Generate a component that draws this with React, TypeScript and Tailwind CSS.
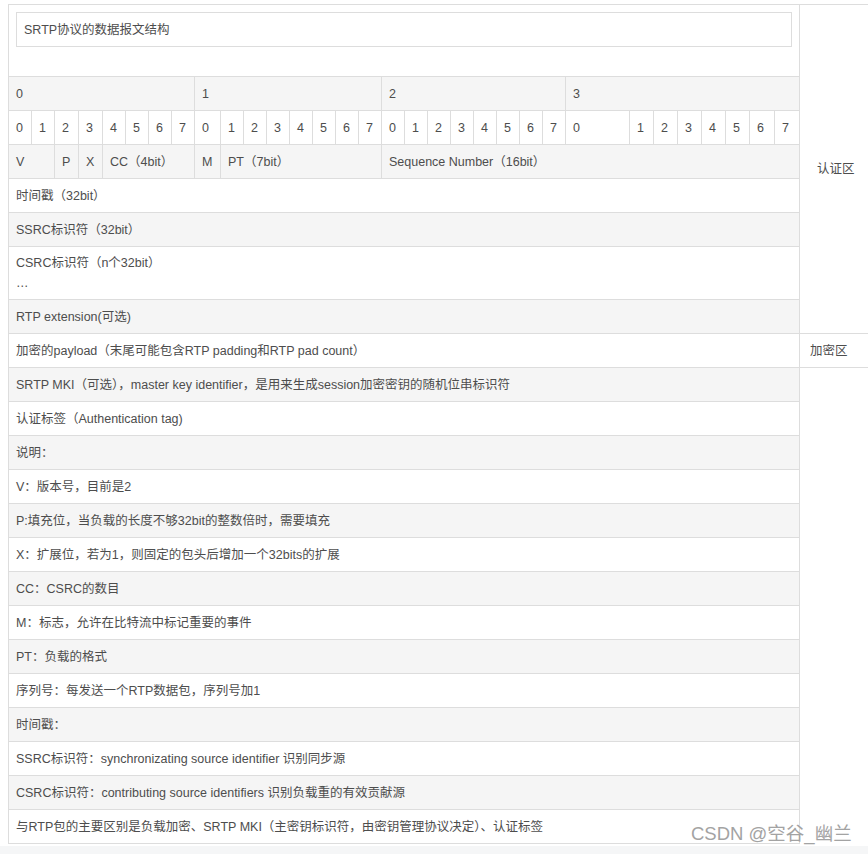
import React from "react";

// Bit layout header of the SRTP packet table
const GROUPS = ["0", "1", "2", "3"];
const BITS = ["0", "1", "2", "3", "4", "5", "6", "7"];

const FIELDS: { label: string; span: string }[] = [
    { label: "V", span: "col-span-2" },
    { label: "P", span: "col-span-1" },
    { label: "X", span: "col-span-1" },
    { label: "CC（4bit）", span: "col-span-4" },
    { label: "M", span: "col-span-1" },
    { label: "PT（7bit）", span: "col-span-7" },
    { label: "Sequence Number（16bit）", span: "col-span-16" },
];

// Full-width rows after the field row, index 4 onwards
const AUTH_ROWS = ["时间戳（32bit）", "SSRC标识符（32bit）", "CSRC", "RTP extension(可选)"];

const NOTE_ROWS = [
    "SRTP MKI（可选），master key identifier，是用来生成session加密密钥的随机位串标识符",
    "认证标签（Authentication tag)",
    "说明：",
    "V：版本号，目前是2",
    "P:填充位，当负载的长度不够32bit的整数倍时，需要填充",
    "X：扩展位，若为1，则固定的包头后增加一个32bits的扩展",
    "CC：CSRC的数目",
    "M：标志，允许在比特流中标记重要的事件",
    "PT：负载的格式",
    "序列号：每发送一个RTP数据包，序列号加1",
    "时间戳：",
    "SSRC标识符：synchronizating source identifier 识别同步源",
    "CSRC标识符：contributing source identifiers 识别负载重的有效贡献源",
    "与RTP包的主要区别是负载加密、SRTP MKI（主密钥标识符，由密钥管理协议决定）、认证标签",
];

const cell = "flex items-center border-b border-r border-[#dddddd] px-[7px]";

function rowBg(index: number): string {
    return index % 2 === 1 ? "bg-[#f5f5f5]" : "bg-white";
}

export default function App() {
    return (
        <div className="relative flex min-h-[854px] flex-col overflow-hidden bg-white font-['Liberation_Sans','Noto_Sans_CJK_SC',sans-serif] text-[12.5px] leading-[20px] text-[#4d4d4d]">
            <div className="ml-[8px] mt-[4px] grid w-fit grid-cols-[23px_23px_repeat(2,24px)_repeat(4,23px)_26px_repeat(15,23px)_64px_repeat(5,24px)_25px_25px_68px] grid-rows-[72px_repeat(5,34px)_53px_repeat(16,34px)] border-l border-t border-[#dddddd]">
                {/* title row */}
                <div className="col-span-32 flex flex-col border-b border-r border-[#dddddd] bg-white px-[7px] pt-[7px]">
                    <div className="flex h-[35px] items-center border border-[#dddddd] px-[7px]">
                        SRTP协议的数据报文结构
                    </div>
                </div>
                <div className="row-span-8 flex items-center border-b border-[#dddddd] bg-white pl-[17px]">
                    认证区
                </div>

                {/* byte numbers */}
                {GROUPS.map((g) => (
                    <div key={g} className={`${cell} col-span-8 bg-[#f5f5f5]`}>
                        {g}
                    </div>
                ))}

                {/* bit numbers */}
                {GROUPS.map((g) =>
                    BITS.map((b) => (
                        <div key={g + b} className={`${cell} bg-white`}>
                            {b}
                        </div>
                    ))
                )}

                {/* header fields */}
                {FIELDS.map((f) => (
                    <div key={f.label} className={`${cell} ${f.span} bg-[#f5f5f5]`}>
                        {f.label}
                    </div>
                ))}

                {AUTH_ROWS.map((text, i) =>
                    text === "CSRC" ? (
                        <div key={text} className={`${cell} col-span-32 flex-col !items-start justify-center ${rowBg(i)}`}>
                            <div>CSRC标识符（n个32bit）</div>
                            <div>…</div>
                        </div>
                    ) : (
                        <div key={text} className={`${cell} col-span-32 ${rowBg(i)}`}>
                            {text}
                        </div>
                    )
                )}

                <div className={`${cell} col-span-32 bg-white`}>
                    加密的payload（末尾可能包含RTP padding和RTP pad count）
                </div>
                <div className="flex items-center border-b border-[#dddddd] bg-white pl-[10px]">加密区</div>

                {NOTE_ROWS.map((text, i) => (
                    <div key={text} className={`${cell} col-span-32 col-start-1 ${rowBg(i + 1)}`}>
                        {text}
                    </div>
                ))}
            </div>
            <div className="mt-[2px] flex-1 bg-[#f5f6f7]" />

            {/* site watermark */}
            <div className="absolute left-[691px] top-[822px] text-[18.5px] leading-[24px] text-[#a3a3a3] [text-shadow:0_0_1px_#ffffff]">
                CSDN @空谷_幽兰
            </div>
        </div>
    );
}
